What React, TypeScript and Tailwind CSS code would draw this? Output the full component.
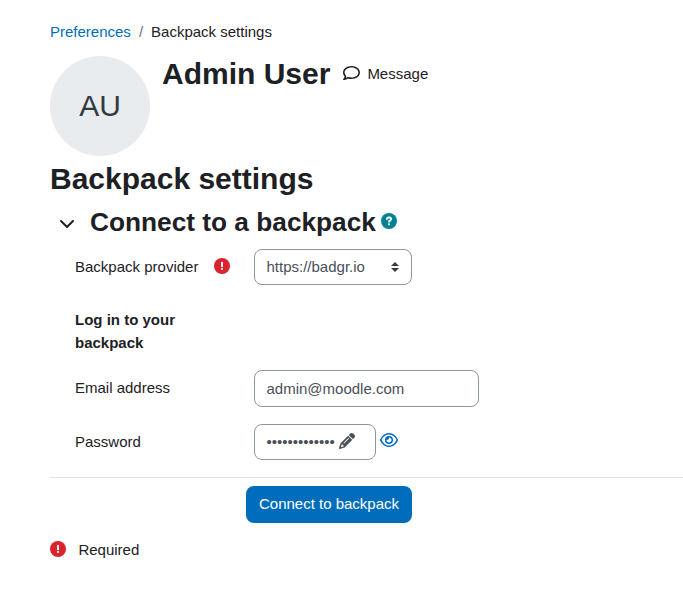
import React from 'react';
import { FaChevronDown, FaPencil, FaRegComment, FaRegEye } from 'react-icons/fa6';

const PASSWORD_LENGTH = 13;

export default function App() {
  return (
    <div className="h-[592px] overflow-hidden bg-white pl-[50px] pt-[21px] font-['Liberation_Sans',Arial,sans-serif] text-[15px] leading-[22.5px] text-[#1d2125]">
      <Breadcrumb />
      <UserHeader />
      <h2 className="mt-[5px] text-[30px] font-bold leading-[36px]">Backpack settings</h2>
      <BackpackForm />
    </div>
  );
}

// ==================== ICONS ====================

function RequiredIcon() {
  return (
    <svg width="16" height="16" viewBox="0 0 16 16" className="mt-[2px] shrink-0">
      <circle cx="8" cy="8" r="8" fill="#d9232e" />
      <path d="M8 4.6v3.8" stroke="#fff" strokeWidth="1.9" strokeLinecap="round" />
      <circle cx="8" cy="11" r="1.1" fill="#fff" />
    </svg>
  );
}

function HelpIcon() {
  return (
    <svg width="16" height="16" viewBox="0 0 16 16" className="ml-[5px] mt-[7px] shrink-0">
      <circle cx="8" cy="8" r="8" fill="#008196" />
      <path
        d="M5.9 6.1C6 5 6.8 4.5 7.8 4.5h.5c1.1 0 1.9.7 1.9 1.6 0 1.2-1.2 1.5-2.1 2.2v.4"
        fill="none"
        stroke="#fff"
        strokeWidth="1.8"
        strokeLinecap="round"
        strokeLinejoin="round"
      />
      <circle cx="8" cy="11.3" r="1.1" fill="#fff" />
    </svg>
  );
}

// ==================== HEADER ====================

function Breadcrumb() {
  return (
    <nav className="flex h-[23px]">
      <a href="#" className="text-[#006dbc]">Preferences</a>
      <span className="px-[8px] text-[#6a737b]">/</span>
      <span>Backpack settings</span>
    </nav>
  );
}

function UserHeader() {
  return (
    <header className="mt-[12px] flex h-[100px] items-start">
      <div className="flex size-[100px] shrink-0 items-center justify-center rounded-full bg-[#e9ecef] text-[30px] text-[#343a40]">
        AU
      </div>
      <h1 className="ml-[12px] text-[30px] font-bold leading-[36px]">Admin User</h1>
      <a href="#" className="ml-[13px] mt-[7px] flex">
        <FaRegComment className="mt-[2px] h-[16px] w-[17px]" preserveAspectRatio="none" />
        <span className="ml-[7px]">Message</span>
      </a>
    </header>
  );
}

// ==================== FORM ====================

function FieldRow({ label, required, children }: {
  label: string;
  required?: boolean;
  children: React.ReactNode;
}) {
  return (
    <div className="flex h-[54px] items-start pl-[25px]">
      <div className="flex w-[179px] pt-[7px]">
        <span className="w-[139.4px]">{label}</span>
        {required && <RequiredIcon />}
      </div>
      {children}
    </div>
  );
}

function BackpackForm() {
  return (
    <form>
      <div className="mt-[9px] flex h-[32px] items-start">
        <FaChevronDown size={16} className="ml-[9px] mt-[9px]" />
        <h3 className="ml-[15px] text-[26.25px] font-bold leading-[32px]">Connect to a backpack</h3>
        <HelpIcon />
      </div>

      <div className="mt-[11px]">
        <FieldRow label="Backpack provider" required>
          <div className="flex h-[36px] w-[158px] items-center justify-between rounded-[8px] border border-[#8f959e] pl-[11.5px] pr-[12px] text-[#495057]">
            <span>https://badgr.io</span>
            <svg width="8" height="10" viewBox="0 0 4 5" preserveAspectRatio="none" fill="#343a40">
              <path d="M2 0L0 2h4zm0 5L0 3h4z" />
            </svg>
          </div>
        </FieldRow>
      </div>

      <p className="ml-[25px] mt-[6px] h-[61px] w-[130px] font-bold">Log in to your backpack</p>

      <FieldRow label="Email address">
        <div className="flex h-[37px] w-[225px] items-center rounded-[8px] border border-[#8f959e] pl-[11.5px] pt-px text-[#495057]">
          admin@moodle.com
        </div>
      </FieldRow>

      <FieldRow label="Password">
        <div className="flex h-[36px] w-[122px] items-center rounded-[8px] border border-[#8f959e] pl-[11.5px] text-[#495057]">
          <span>{'•'.repeat(PASSWORD_LENGTH)}</span>
          <FaPencil size={16} className="ml-[4px] -mt-[2px]" />
        </div>
        <FaRegEye className="ml-[4px] mt-[8px] h-[16px] w-[18px] text-[#006dbc]" />
      </FieldRow>

      <hr className="-mt-px border-[#dee2e6]" />

      <button
        type="button"
        className="ml-[196px] mt-[8px] flex h-[37px] w-[166px] items-center justify-center rounded-[8px] bg-[#006dbc] text-white"
      >
        Connect to backpack
      </button>

      <div className="mt-[16px] flex">
        <RequiredIcon />
        <span className="ml-[12.4px]">Required</span>
      </div>
    </form>
  );
}
